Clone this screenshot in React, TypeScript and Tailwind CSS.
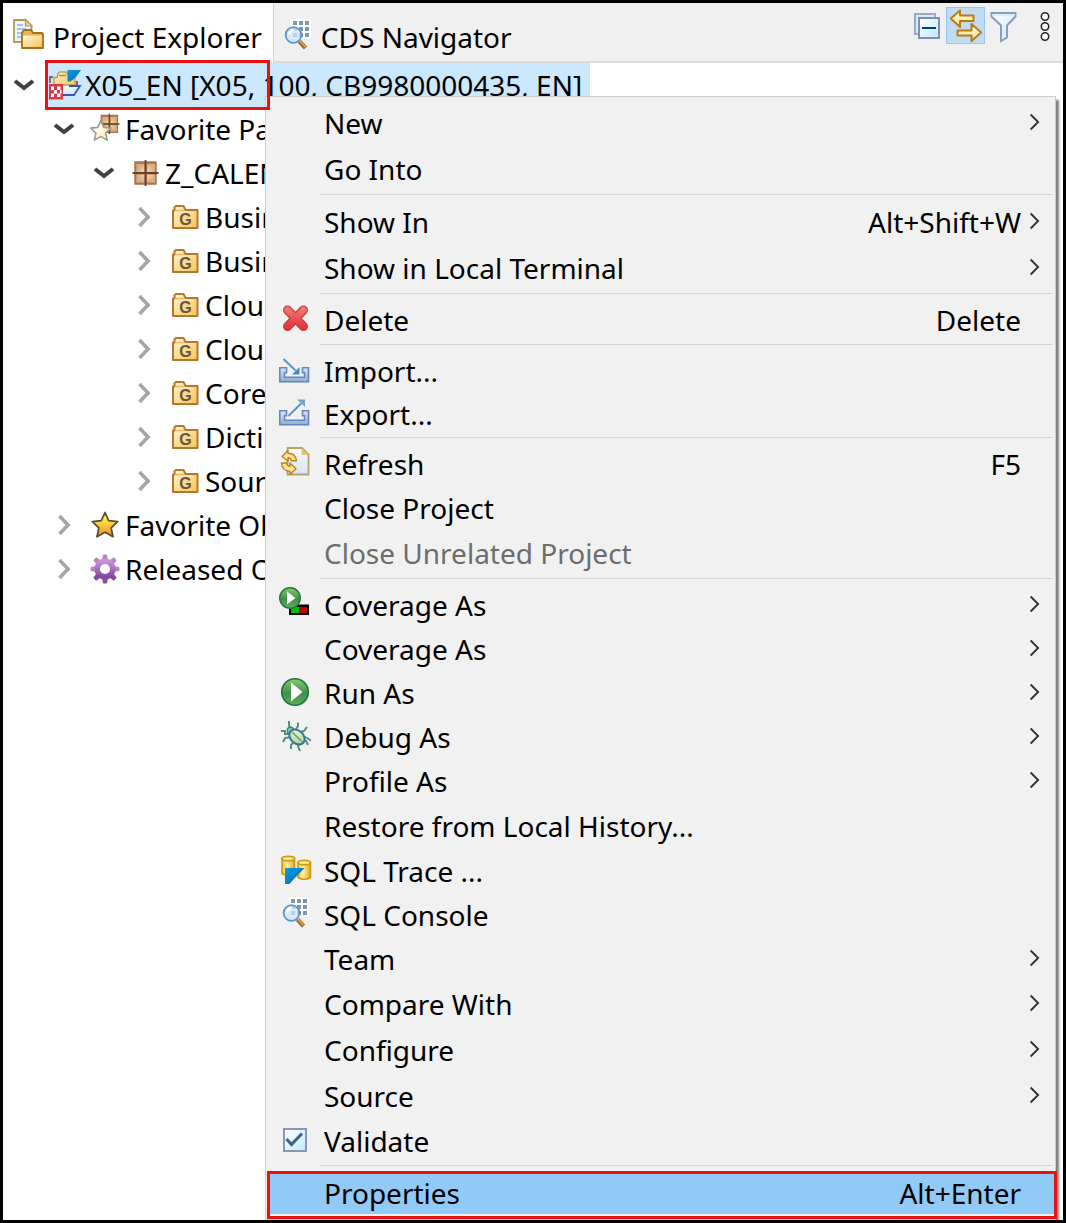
import type { ReactNode } from "react";

function Svg({ children, className = "size-8" }: { children: ReactNode; className?: string }) {
  return (
    <svg viewBox="0 0 32 32" className={`${className} shrink-0 overflow-visible`} fill="none" aria-hidden="true">
      {children}
    </svg>
  );
}

function Gradients() {
  return (
    <svg className="absolute size-0" aria-hidden="true">
      <defs>
        <linearGradient id="gold" x1="0" y1="0" x2="1" y2="1">
          <stop offset="0" stopColor="#fff6cf" />
          <stop offset="1" stopColor="#f3c65c" />
        </linearGradient>
        <linearGradient id="cream" x1="0" y1="0" x2="0" y2="1">
          <stop offset="0" stopColor="#fffbe6" />
          <stop offset="1" stopColor="#fbe08a" />
        </linearGradient>
        <linearGradient id="star" x1="0" y1="0" x2="0" y2="1">
          <stop offset="0.2" stopColor="#fff04a" />
          <stop offset="0.9" stopColor="#f09a2c" />
        </linearGradient>
        <linearGradient id="paleStar" x1="0" y1="0" x2="1" y2="1">
          <stop offset="0.3" stopColor="#ffffff" />
          <stop offset="0.7" stopColor="#fdeeb4" />
        </linearGradient>
        <linearGradient id="purple" x1="0" y1="0" x2="0" y2="1">
          <stop offset="0" stopColor="#c795d2" />
          <stop offset="1" stopColor="#86489b" />
        </linearGradient>
        <linearGradient id="red" gradientUnits="userSpaceOnUse" x1="0" y1="2" x2="0" y2="28">
          <stop offset="0" stopColor="#f48077" />
          <stop offset="1" stopColor="#e02a36" />
        </linearGradient>
        <linearGradient id="green" x1="0" y1="0" x2="0" y2="1">
          <stop offset="0" stopColor="#8ccb6c" />
          <stop offset="0.55" stopColor="#3f8f4b" />
          <stop offset="1" stopColor="#5fae5c" />
        </linearGradient>
        <linearGradient id="tray" x1="0" y1="0" x2="0" y2="1">
          <stop offset="0" stopColor="#dbe8f6" />
          <stop offset="1" stopColor="#8fadd8" />
        </linearGradient>
        <linearGradient id="pane" x1="0" y1="0" x2="1" y2="1">
          <stop offset="0" stopColor="#ffffff" />
          <stop offset="1" stopColor="#bfe9fd" />
        </linearGradient>
        <linearGradient id="page" x1="0" y1="0" x2="0" y2="1">
          <stop offset="0" stopColor="#f7faff" />
          <stop offset="1" stopColor="#d7e4fa" />
        </linearGradient>
        <linearGradient id="cyl" x1="0" y1="0" x2="1" y2="0">
          <stop offset="0" stopColor="#f2c230" />
          <stop offset="0.4" stopColor="#fff0a0" />
          <stop offset="1" stopColor="#e5a91c" />
        </linearGradient>
        <linearGradient id="blue" x1="0" y1="0" x2="1" y2="1">
          <stop offset="0" stopColor="#0a9be0" />
          <stop offset="1" stopColor="#0468b0" />
        </linearGradient>
        <radialGradient id="brown">
          <stop offset="0" stopColor="#f5e2b4" />
          <stop offset="1" stopColor="#d8b080" />
        </radialGradient>
        <linearGradient id="bug" x1="0" y1="0" x2="1" y2="1">
          <stop offset="0" stopColor="#f4fae6" />
          <stop offset="1" stopColor="#a4cc8e" />
        </linearGradient>
      </defs>
    </svg>
  );
}

const ExplorerIcon = () => (
  <Svg>
    <path d="M1 2h11.500l6 6v16H1z" fill="#eaf4fb" stroke="#b39b55" strokeWidth="1.800" />
    <path d="M12.500 1.500V8H19z" fill="#ead491" stroke="#b39b55" strokeWidth="1.200" />
    <path d="M4 7h6M4 11h9M4 15h4M4 19h4" stroke="#8fb3dc" strokeWidth="1.600" />
    <path d="M9 30V14.500l2-2.500h7l2 3h9l1 1v14z" fill="#e3b45a" stroke="#a86e20" strokeWidth="1.800" strokeLinejoin="round" />
    <path d="M10 17.500h19v11.500H10z" fill="url(#gold)" />
  </Svg>
);

const ConsoleIcon = () => (
  <Svg>
    <path d="M9.500-1H30v20H9.500z" fill="#fff" />
    <path
      d="M12 1h4v4h-4zM18 1h4v4h-4zM24 1h4v4h-4zM12 7h4v4h-4zM18 7h4v4h-4zM24 7h4v4h-4zM12 13h4v4h-4zM18 13h4v4h-4zM24 13h4v4h-4z"
      fill="#7c98ac"
    />
    <path d="M18.500 21.500l6 6.500" stroke="#a06a30" strokeWidth="4.400" />
    <path d="M19 21l5.500 6" stroke="#dca964" strokeWidth="1.400" />
    <circle cx="12.500" cy="15" r="7.800" fill="#cfe5f9" fillOpacity="0.75" stroke="#5a94d8" strokeWidth="1.800" />
    <path d="M8 14.500q1-4 5-4.500" stroke="#fff" strokeWidth="2" />
  </Svg>
);

const ProjectIcon = () => (
  <Svg>
    <path d="M1 14V8h3M28 12v5" stroke="#70707c" strokeWidth="2" />
    <path d="M5 16V8.500h3L9 4.500 11 3h6l2 2.500 1 3h6V16z" fill="url(#gold)" stroke="#c39a50" strokeWidth="1.400" />
    <path d="M10 6.500h7" stroke="#b88a3c" strokeWidth="1.600" />
    <path d="M4 17h27l-6 9H14z" fill="url(#pane)" />
    <path d="M20 17h11l-6 9H14" stroke="#3c55b4" strokeWidth="1.800" />
    <path d="M18.500 1H32L27 8l-5.500 4.500h-3z" fill="url(#blue)" />
    <path d="M0 15h14v15.500H0z" fill="#d83a4a" />
    <path d="M2 17.500h3V21H2zM8 17.500h3.500V21H8zM5 21h3v3.500H5zM11 21h1.500v3.500H11zM2 24.500h3V28H2zM8 24.500h3.500V28H8z" fill="#fff" />
  </Svg>
);

const PackageShape = () => (
  <>
    <path d="M6 5h21v22H6z" fill="#b27f5b" stroke="#a8714f" strokeWidth="1.400" />
    <path d="M7.500 7h8v8h-8zM18 7h8v8h-8zM7.500 17.500h8v8h-8zM18 17.500h8v8h-8z" fill="url(#brown)" />
    <path d="M16.500 3v26M3.500 16h26" stroke="#6e3f2c" strokeWidth="1.800" />
  </>
);

const PackageIcon = () => (
  <Svg>
    <PackageShape />
  </Svg>
);

const starPath = "M16 3.500l3.700 8.200 9 1-6.600 6.100 1.900 8.900L16 23.300l-8 4.400 1.900-8.900-6.600-6.100 9-1z";

const FavoritePackageIcon = () => (
  <Svg>
    <g transform="translate(7.500 -1.500) scale(.78)">
      <PackageShape />
    </g>
    <g transform="translate(-1 5) scale(.8)">
      <path d={starPath} fill="url(#paleStar)" stroke="#9c9c94" strokeWidth="2" strokeLinejoin="round" />
    </g>
  </Svg>
);

const FavoriteIcon = () => (
  <Svg>
    <path d={starPath} fill="url(#star)" stroke="#5c4a35" strokeWidth="1.800" strokeLinejoin="round" />
  </Svg>
);

const FolderIcon = () => (
  <Svg>
    <path d="M4 27V9.500h1.500V6L7 5h7.500l2 4h12V27z" fill="url(#gold)" stroke="#b5762d" strokeWidth="2" strokeLinejoin="round" />
    <path d="M7 9.500h8" stroke="#e9bd72" strokeWidth="1.600" />
    <text x="16.500" y="24" textAnchor="middle" fontSize="16" fontWeight="700" fontFamily="Liberation Sans, sans-serif" fill="#70533c">
      G
    </text>
  </Svg>
);

const GearIcon = () => (
  <Svg>
    {[0, 45, 90, 135, 180, 225, 270, 315].map((a) => (
      <path key={a} d="M13.800 6l.6-4h3.200l.6 4z" fill={a > 90 && a < 270 ? "#86489b" : "#b982c6"} stroke={a > 90 && a < 270 ? "#86489b" : "#b982c6"} transform={`rotate(${a} 16 16)`} />
    ))}
    <circle cx="16" cy="16" r="7.800" stroke="url(#purple)" strokeWidth="5.500" />
  </Svg>
);

const DeleteIcon = () => (
  <Svg>
    <path d="M8.500 7l16 16.500M24.500 7l-16 16.500" stroke="#c9393f" strokeWidth="9" strokeLinecap="round" />
    <path d="M8.500 7l16 16.500M24.500 7l-16 16.500" stroke="url(#red)" strokeWidth="6.600" strokeLinecap="round" />
  </Svg>
);

const Tray = () => (
  <path d="M.8 13.800h6.700v5H5.500v4.400h20v-4.400h-2v-5h6v14H.8z" fill="url(#tray)" stroke="#6686bb" strokeWidth="1.600" />
);

const ImportIcon = () => (
  <Svg>
    <Tray />
    <path d="M4.500 5l12 11.500" stroke="#5a96c2" strokeWidth="2" />
    <path d="M20.500 13v7.500H13z" fill="#4b8bbd" />
  </Svg>
);

const ExportIcon = () => (
  <Svg>
    <Tray />
    <path d="M9.500 19L22 6.500" stroke="#5a96c2" strokeWidth="2" />
    <path d="M18 2.500h8V10z" fill="#70a4c4" />
  </Svg>
);

const RefreshIcon = () => (
  <Svg>
    <path d="M8.500 1h14.500l6.500 6.500V27.500h-21z" fill="url(#page)" stroke="#b8a468" strokeWidth="1.800" />
    <path d="M22.500 1v7h7z" fill="#e1c777" />
    <g fill="#fde58e" stroke="#b98420" strokeWidth="1.400" strokeLinejoin="round">
      <path d="M3 9.500l6-6v2.800q7.500 0 8.500 7.500h-5q-.5-2.500-3.500-3v3.500z" />
      <path d="M2.500 16h5q.5 3 3.500 3.500v-3.500l6 5.800-6 5.700v-3q-8-.8-8.500-8.500z" />
    </g>
  </Svg>
);

const CoverageIcon = () => (
  <Svg>
    <path d="M10 16.500h20v10.500H10z" fill="#000" />
    <path d="M12 19h8v6h-8z" fill="#00c000" />
    <path d="M20 19h8v6h-8z" fill="#c00000" />
    <circle cx="11" cy="10" r="10.300" fill="url(#green)" stroke="#23763f" strokeWidth="1.400" />
    <path d="M8 3.500v13l8.500-6.500z" fill="#fff" />
  </Svg>
);

const RunIcon = () => (
  <Svg>
    <circle cx="16" cy="16" r="13.300" fill="url(#green)" stroke="#23763f" strokeWidth="1.600" />
    <path d="M12 6.500v19l11.500-9.500z" fill="#fff" />
  </Svg>
);

const DebugIcon = () => (
  <Svg>
    <path
      d="M12 11L10 5V1M17 9l2-3V2.500M10 14H6V11H2M12 17l-6 1-2 4M15 22l-3 3v4M20 24l-1 2 2 5M22 12l3-1 3-4M24 16l4 2 4 2.500M24 21h3l2 4"
      stroke="#4f8a78"
      strokeWidth="1.900"
    />
    <circle cx="11.500" cy="10.500" r="3.200" fill="#9cc7b8" stroke="#3a7f88" strokeWidth="1.400" />
    <ellipse cx="18" cy="17" rx="8.600" ry="6.400" transform="rotate(42 18 17)" fill="url(#bug)" stroke="#34798f" strokeWidth="2" />
    <path d="M13 12l10 9.500" stroke="#67a06b" strokeWidth="1.600" />
  </Svg>
);

const TraceIcon = () => (
  <Svg>
    {[0, 16].map((x) => (
      <g key={x} transform={x ? "translate(16 4)" : undefined}>
        <path d="M3 4.500v15q6 3.500 12.500 0v-15z" fill="url(#cyl)" stroke="#cf9612" strokeWidth="1.600" />
        <ellipse cx="9.200" cy="4.500" rx="6.200" ry="2.300" fill="#fae694" stroke="#cf9612" strokeWidth="1.600" />
      </g>
    ))}
    <path d="M6 14h19.500L14 26l-3.500 4H6z" fill="url(#blue)" />
  </Svg>
);

const ValidateIcon = () => (
  <Svg>
    <path d="M5 5h22v22H5z" fill="url(#pane)" stroke="#8797b4" strokeWidth="2" />
    <path d="M7.500 15l5 5.500L23 9.500" stroke="#485d82" strokeWidth="3" />
  </Svg>
);

const CollapseIcon = () => (
  <Svg>
    <path d="M3 3h20v20H3z" fill="#d4effc" stroke="#99a9c6" strokeWidth="2" />
    <path d="M7 7h20v20H7z" fill="url(#pane)" stroke="#7f8fae" strokeWidth="2" />
    <path d="M10 17h14" stroke="#003f7d" strokeWidth="2" />
  </Svg>
);

const LinkIcon = () => (
  <Svg>
    <g fill="url(#cream)" stroke="#b97c14" strokeWidth="2" strokeLinejoin="round">
      <path d="M.8 8.500L10 .5v5h13.500V11H10v6z" />
      <path d="M31.200 22.500L21.500 31v-5.500H7.500v-5h14V14z" />
    </g>
  </Svg>
);

const FilterIcon = () => (
  <Svg>
    <path d="M2.500 2h24V5.500l-8.500 9v12L12 30V14.500l-9.500-9z" fill="url(#pane)" stroke="#8c9cbb" strokeWidth="2" />
    <path d="M3.500 3h22v2h-22z" fill="#d7f1fc" />
  </Svg>
);

const MenuDotsIcon = () => (
  <Svg>
    <g stroke="#222" strokeWidth="1.500" fill="#fff">
      <circle cx="16" cy="5.500" r="3.700" />
      <circle cx="16" cy="15.500" r="3.700" />
      <circle cx="16" cy="25.500" r="3.700" />
    </g>
  </Svg>
);

type TreeRow = { id: string; label: string; indent: string; open?: boolean; selected?: boolean; icon: ReactNode };

const tree: TreeRow[] = [
  { id: "project", label: "X05_EN [X05, 100, CB9980000435, EN]", indent: "pl-0", open: true, selected: true, icon: <ProjectIcon /> },
  { id: "favorite-packages", label: "Favorite Pa", indent: "pl-10", open: true, icon: <FavoritePackageIcon /> },
  { id: "package", label: "Z_CALEN", indent: "pl-20", open: true, icon: <PackageIcon /> },
  { id: "business-1", label: "Busin", indent: "pl-30", icon: <FolderIcon /> },
  { id: "business-2", label: "Busin", indent: "pl-30", icon: <FolderIcon /> },
  { id: "cloud-1", label: "Clou", indent: "pl-30", icon: <FolderIcon /> },
  { id: "cloud-2", label: "Clou", indent: "pl-30", icon: <FolderIcon /> },
  { id: "core", label: "Core", indent: "pl-30", icon: <FolderIcon /> },
  { id: "dictionary", label: "Dicti", indent: "pl-30", icon: <FolderIcon /> },
  { id: "source", label: "Sour", indent: "pl-30", icon: <FolderIcon /> },
  { id: "favorite-objects", label: "Favorite Ob", indent: "pl-10", icon: <FavoriteIcon /> },
  { id: "released", label: "Released O", indent: "pl-10", icon: <GearIcon /> },
];

function TreeItem({ row }: { row: TreeRow }) {
  return (
    <li className={`flex h-11 items-center ${row.indent}`}>
      <button className="flex h-full w-10 shrink-0 items-center justify-center" aria-label={`Toggle ${row.label}`}>
        <Svg>
          {row.open ? (
            <path d="M6 12l9 7 9-7" stroke="#404040" strokeWidth="4" />
          ) : (
            <path d="M10.500 7l8.500 9-8.500 9" stroke="#a6a6a6" strokeWidth="3.600" />
          )}
        </Svg>
      </button>
      <span className={`flex h-full items-center pr-2 whitespace-nowrap ${row.selected ? "bg-[#cce8ff]" : ""}`}>
        <span className="flex w-10 shrink-0 justify-center">{row.icon}</span>
        {row.label}
      </span>
    </li>
  );
}

type Entry =
  | "separator"
  | { label: string; height: string; icon?: ReactNode; keys?: string; submenu?: boolean; disabled?: boolean };

const menu: Entry[] = [
  { label: "New", height: "h-[46px]", submenu: true },
  { label: "Go Into", height: "h-[46px]" },
  "separator",
  { label: "Show In", height: "h-[46px]", keys: "Alt+Shift+W", submenu: true },
  { label: "Show in Local Terminal", height: "h-[46px]", submenu: true },
  "separator",
  { label: "Delete", height: "h-11", icon: <DeleteIcon />, keys: "Delete" },
  "separator",
  { label: "Import...", height: "h-[43px]", icon: <ImportIcon /> },
  { label: "Export...", height: "h-[43px]", icon: <ExportIcon /> },
  "separator",
  { label: "Refresh", height: "h-11", icon: <RefreshIcon />, keys: "F5" },
  { label: "Close Project", height: "h-11" },
  { label: "Close Unrelated Project", height: "h-[46px]", disabled: true },
  "separator",
  { label: "Coverage As", height: "h-11", icon: <CoverageIcon />, submenu: true },
  { label: "Coverage As", height: "h-11", submenu: true },
  { label: "Run As", height: "h-11", icon: <RunIcon />, submenu: true },
  { label: "Debug As", height: "h-11", icon: <DebugIcon />, submenu: true },
  { label: "Profile As", height: "h-11", submenu: true },
  { label: "Restore from Local History...", height: "h-[46px]" },
  { label: "SQL Trace ...", height: "h-11", icon: <TraceIcon /> },
  { label: "SQL Console", height: "h-11", icon: <ConsoleIcon /> },
  { label: "Team", height: "h-11", submenu: true },
  { label: "Compare With", height: "h-[46px]", submenu: true },
  { label: "Configure", height: "h-[46px]", submenu: true },
  { label: "Source", height: "h-[46px]", submenu: true },
  { label: "Validate", height: "h-11", icon: <ValidateIcon /> },
  "separator",
];

function MenuItem({ item }: { item: Exclude<Entry, "separator"> }) {
  return (
    <button
      disabled={item.disabled}
      className={`flex w-full items-center whitespace-nowrap pl-[13px] text-left ${item.height} ${item.disabled ? "text-[#6d6d6d]" : ""}`}
    >
      <span className="mb-1 w-[45px] shrink-0">{item.icon}</span>
      <span className="mb-0.5 grow">{item.label}</span>
      {item.keys && <span className="mb-0.5">{item.keys}</span>}
      <span className="mr-1.5 mb-1 flex w-7 shrink-0 justify-center">
        {item.submenu && (
          <Svg className="size-5">
            <path d="M9 4l12 12L9 28" stroke="#333" strokeWidth="3" />
          </Svg>
        )}
      </span>
    </button>
  );
}

function ContextMenu() {
  return (
    <div className="absolute top-[93px] right-[7px] left-[262px] border border-[#cccccc] bg-[#f1f1f1] pt-1 shadow-[3px_4px_2px_0px_#00000080]">
      {menu.map((item, i) =>
        item === "separator" ? (
          <div key={i} className="h-[7px] pt-px pr-0.5 pl-[54px]">
            <hr className="border-[#d7d7d7]" />
          </div>
        ) : (
          <MenuItem key={i} item={item} />
        ),
      )}
      <div className="-mr-0.5 ml-px border-[3px] border-[#ea1111] bg-[#91c9f7]">
        <button className="flex h-[42px] w-full items-center border-b-2 border-[#eef3f8] pr-[33px] pb-0.5 pl-[54px] text-left">
          <span className="grow">Properties</span>
          <span>Alt+Enter</span>
        </button>
      </div>
    </div>
  );
}

export default function App() {
  return (
    <div className="relative min-h-screen overflow-hidden border-[3px] border-black bg-white font-['Noto_Sans','Open_Sans',sans-serif] text-[28px] leading-9 text-black">
      <Gradients />
      <header className="flex h-[60px] border-b-2 border-[#dcdcdc] bg-[#f0f0f0]">
        <div role="tablist" className="flex">
          <button role="tab" aria-selected="true" className="-mb-0.5 flex items-center gap-2 border-r border-[#d0d0d0] bg-white pt-2 pr-[11px] pl-[10px] whitespace-nowrap">
            <span className="mb-1.5">
              <ExplorerIcon />
            </span>
            Project Explorer
          </button>
          <button role="tab" aria-selected="false" className="flex items-center gap-2 pt-2.5 pl-[7px] whitespace-nowrap">
            <span className="mb-0.5">
              <ConsoleIcon />
            </span>
            CDS Navigator
          </button>
        </div>
        <div className="ml-auto flex items-start gap-0.5 pt-1">
          <button aria-label="Collapse all" className="flex h-10 w-8 items-center justify-center">
            <CollapseIcon />
          </button>
          <button aria-label="Link with editor" aria-pressed="true" className="flex h-[37px] w-[39px] items-center justify-center border border-[#90c8f6] bg-[#c0dcf3]">
            <LinkIcon />
          </button>
          <button aria-label="Filters" className="flex h-10 w-9 items-center justify-center">
            <FilterIcon />
          </button>
          <button aria-label="View menu" className="ml-0.5 flex h-10 w-9 items-center justify-center">
            <MenuDotsIcon />
          </button>
        </div>
      </header>
      <ul className="pl-0.5">
        {tree.map((row) => (
          <TreeItem key={row.id} row={row} />
        ))}
      </ul>
      <ContextMenu />
      <div className="pointer-events-none absolute top-[57px] left-[42px] h-[50px] w-[225px] border-[3px] border-[#ea1111]" />
    </div>
  );
}
